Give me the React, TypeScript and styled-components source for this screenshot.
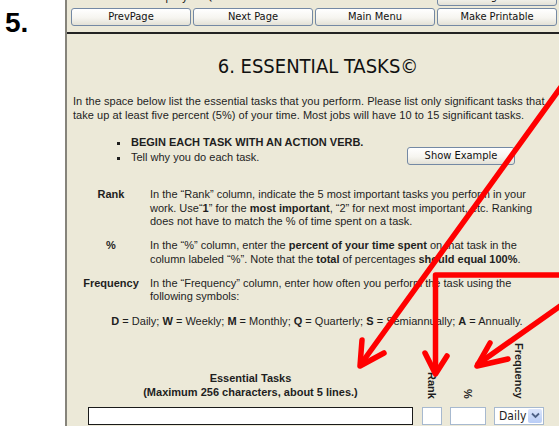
import React from 'react';
import styled, { createGlobalStyle } from 'styled-components';

const GlobalStyle = createGlobalStyle`
  html, body {
    margin: 0;
    padding: 0;
    background: #ffffff;
    overflow: hidden;
  }
  body {
    font-family: "Liberation Sans", Arial, sans-serif;
    color: #1e1e1e;
  }
`;

const NAV_BUTTONS = ['PrevPage', 'Next Page', 'Main Menu', 'Make Printable'];

type Definition = {
  label: string
  body: React.ReactNode
}

const DEFINITIONS: Definition[] = [
  {
    label: 'Rank',
    body: (
      <>
        In the “Rank” column, indicate the 5 most important tasks you perform in your work.
        Use“<b>1</b>” for the <b>most important</b>, “2” for next most important, etc. Ranking
        does not have to match the % of time spent on a task.
      </>
    )
  },
  {
    label: '%',
    body: (
      <>
        In the “%” column, enter the <b>percent of your time spent</b> on that task in the
        column labeled “%”. Note that the <b>total</b> of percentages <b>should equal 100%</b>.
      </>
    )
  },
  {
    label: 'Frequency',
    body: (
      <>
        In the “Frequency” column, enter how often you perform the task using the
        following symbols:
      </>
    )
  }
];

const FREQUENCIES: [string, string][] = [
  ['D', 'Daily'],
  ['W', 'Weekly'],
  ['M', 'Monthly'],
  ['Q', 'Quarterly'],
  ['S', 'Semiannually'],
  ['A', 'Annually']
];

export default function App() {
  return (
    <>
      <GlobalStyle />
      <StyledPage>
        <StyledStepColumn>
          <StyledStepNumber>5.</StyledStepNumber>
        </StyledStepColumn>

        <StyledFormPanel>
          <StyledTopBar>
            <StyledFormName>Employee Questionnaire:</StyledFormName>
            <StyledNavButton>Log Off</StyledNavButton>
          </StyledTopBar>
          <StyledNavRow>
            {NAV_BUTTONS.map(label => (
              <StyledNavButton key={label}>{label}</StyledNavButton>
            ))}
          </StyledNavRow>
          <StyledRule />

          <StyledTitle>6. ESSENTIAL TASKS©</StyledTitle>
          <StyledIntro>
            In the space below list the essential tasks that you perform. Please list only
            significant tasks that take up at least five percent (5%) of your time. Most jobs
            will have 10 to 15 significant tasks.
          </StyledIntro>

          <StyledTipsRow>
            <StyledTips>
              <li><b>BEGIN EACH TASK WITH AN ACTION VERB.</b></li>
              <li>Tell why you do each task.</li>
            </StyledTips>
            <StyledNavButton $width={108}>Show Example</StyledNavButton>
          </StyledTipsRow>

          <StyledDefinitions>
            {DEFINITIONS.map(d => (
              <React.Fragment key={d.label}>
                <StyledTerm>{d.label}</StyledTerm>
                <StyledDescription>{d.body}</StyledDescription>
              </React.Fragment>
            ))}
          </StyledDefinitions>

          <StyledLegend>
            {FREQUENCIES.map(([key, name], i) => (
              <React.Fragment key={key}>
                <b>{key}</b> = {name}{i < FREQUENCIES.length - 1 ? '; ' : '.'}
              </React.Fragment>
            ))}
          </StyledLegend>

          <StyledTaskGrid>
            <StyledTaskHeading>
              Essential Tasks<br />
              (Maximum 256 characters, about 5 lines.)
            </StyledTaskHeading>
            <StyledSideHeading>Rank</StyledSideHeading>
            <StyledSideHeading>%</StyledSideHeading>
            <StyledSideHeading>Frequency</StyledSideHeading>

            <StyledTaskField />
            <StyledSmallField $width={20} />
            <StyledSmallField $width={36} />
            <StyledSelectBox>
              <span>Daily</span>
              <StyledSelectArrow>
                <svg width="9" height="7" viewBox="0 0 9 7">
                  <path d="M1 1.5 L4.5 5 L8 1.5" fill="none" stroke="#4d6185" strokeWidth="1.8" />
                </svg>
              </StyledSelectArrow>
            </StyledSelectBox>
          </StyledTaskGrid>
        </StyledFormPanel>

        <StyledMarkup width="559" height="426" viewBox="0 0 559 426">
          <g fill="none" stroke="#ff0000" strokeWidth="5.5" strokeLinecap="round" strokeLinejoin="round">
            <path d="M566 80 L361 364" />
            <path d="M362 340 L360 366 L384 353" />
            <path d="M566 275 L435.5 275 L435.5 372" />
            <path d="M425 353 L435.5 374 L447 356" />
            <path d="M566 302 L478 364" />
            <path d="M490 343 L477 366 L508 359" />
          </g>
        </StyledMarkup>
      </StyledPage>
    </>
  );
}

const StyledPage = styled.div`
  position: relative;
  display: flex;
  width: 570px;
  height: 426px;
  overflow: hidden;
`;

const StyledStepColumn = styled.div`
  width: 65px;
  flex-shrink: 0;
  padding: 7px 0 0 5px;
  box-sizing: border-box;
`;

const StyledStepNumber = styled.div`
  font-size: 28px;
  font-weight: bold;
  color: #000;
`;

const StyledFormPanel = styled.div`
  width: 500px;
  flex-shrink: 0;
  background: #ece9d8;
  border-left: 2px solid #86847b;
  padding: 0 0 0 4px;
  box-sizing: border-box;
`;

const StyledTopBar = styled.div`
  display: flex;
  justify-content: space-between;
  margin-top: -12px;
  width: 486px;
`;

const StyledFormName = styled.div`
  width: 290px;
  margin-top: 1px;
  text-align: center;
  font-family: "DejaVu Sans Condensed", "DejaVu Sans", sans-serif;
  font-size: 12px;
  line-height: 14px;
`;

const StyledNavRow = styled.div`
  display: grid;
  grid-template-columns: repeat(4, 120px);
  column-gap: 2px;
  margin-top: 2px;
`;

const StyledNavButton = styled.div<{ $width?: number }>`
  width: ${p => (p.$width ? `${p.$width}px` : '120px')};
  height: 18px;
  box-sizing: border-box;
  border: 1px solid #7489a4;
  border-radius: 3px;
  background: linear-gradient(#ffffff 0%, #f6f5f0 55%, #e3e1d6 100%);
  font-family: "DejaVu Sans Condensed", "DejaVu Sans", sans-serif;
  font-size: 11px;
  line-height: 16px;
  text-align: center;
  color: #111;
  white-space: nowrap;
`;

const StyledRule = styled.div`
  height: 2px;
  background: #232323;
  margin: 6px 0 0 -4px;
`;

const StyledTitle = styled.h1`
  margin: 20px 0 0;
  font-family: "DejaVu Sans Condensed", "DejaVu Sans", sans-serif;
  font-weight: normal;
  font-size: 20px;
  line-height: 24px;
  text-align: center;
  color: #111;
`;

const StyledIntro = styled.p`
  margin: 17px 0 0 2px;
  width: 486px;
  font-size: 11px;
  line-height: 13.5px;
  letter-spacing: 0.05px;
`;

const StyledTipsRow = styled.div`
  display: flex;
  align-items: flex-end;
  margin-top: 13px;
`;

const StyledTips = styled.ul`
  margin: 0;
  padding: 0 0 0 59px;
  width: 277px;
  list-style: square;
  font-size: 11px;
  line-height: 15px;

  li {
    padding-left: 1px;
  }
`;

const StyledDefinitions = styled.div`
  display: grid;
  grid-template-columns: 66px 388px;
  column-gap: 6px;
  row-gap: 10.5px;
  margin: 23px 0 0 7px;
  font-size: 11px;
  line-height: 13.5px;
`;

const StyledTerm = styled.div`
  font-weight: bold;
  text-align: center;
`;

const StyledDescription = styled.div``;

const StyledLegend = styled.div`
  margin-top: 11px;
  width: 492px;
  text-align: center;
  font-size: 11px;
  line-height: 13.5px;
`;

const StyledTaskGrid = styled.div`
  display: grid;
  grid-template-columns: 333px 26px 42px 56px;
  column-gap: 2px;
  row-gap: 8px;
  align-items: end;
  justify-items: center;
  margin: 15px 0 0 13px;
`;

const StyledTaskHeading = styled.div`
  font-size: 11px;
  font-weight: bold;
  line-height: 14px;
  text-align: center;
`;

const StyledSideHeading = styled.div`
  writing-mode: vertical-rl;
  font-size: 11px;
  font-weight: bold;
  line-height: 12px;
`;

const StyledTaskField = styled.div`
  width: 325px;
  height: 18px;
  box-sizing: border-box;
  border: 1px solid #1a1a1a;
  background: #fff;
`;

const StyledSmallField = styled.div<{ $width: number }>`
  width: ${p => p.$width}px;
  height: 18px;
  box-sizing: border-box;
  border: 1px solid #a7b9cf;
  background: #fff;
`;

const StyledSelectBox = styled.div`
  display: flex;
  align-items: center;
  justify-content: space-between;
  width: 50px;
  height: 18px;
  box-sizing: border-box;
  border: 1px solid #a7b9cf;
  background: #fff;
  padding: 1px;
  font-family: "DejaVu Sans Condensed", "DejaVu Sans", sans-serif;
  font-size: 12px;

  span {
    padding-left: 3px;
  }
`;

const StyledSelectArrow = styled.div`
  display: flex;
  align-items: center;
  justify-content: center;
  width: 14px;
  height: 14px;
  border-radius: 2px;
  background: linear-gradient(#dbe5fb, #b9cdf6);
`;

const StyledMarkup = styled.svg`
  position: absolute;
  left: 0;
  top: 0;
  pointer-events: none;
`;
